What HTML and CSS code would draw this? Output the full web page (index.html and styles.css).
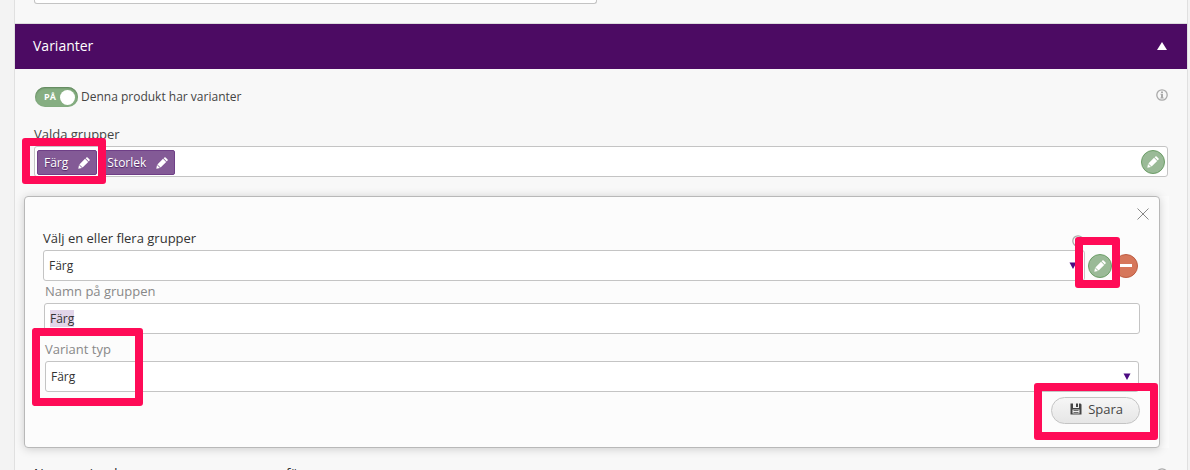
FILE: index.html
```
<!DOCTYPE html>
<html lang="sv">

<head>
    <meta charset="UTF-8">
    <meta name="viewport" content="width=device-width, initial-scale=1.0">
    <title>Varianter</title>
    <link rel="stylesheet" href="styles.css">
</head>

<body>
    <svg width="0" height="0" class="sprite">
        <symbol id="pencil" viewBox="0 0 12 12">
            <path d="M0.3 11.7 L1 8 L4 11 Z M1.4 7.4 L7 1.8 L10.2 5 L4.6 10.6 Z M7.6 1.2 L8.4 0.4 Q9 0 9.6 0.4 L11.6 2.4 Q12 3 11.6 3.6 L10.8 4.4 Z" />
        </symbol>
        <symbol id="info" viewBox="0 0 12 12">
            <circle cx="6" cy="6" r="5.2" fill="none" stroke="currentColor" stroke-width="1.3" />
            <path d="M5 2.5 H7 V4 H5 Z M4.5 4.8 H7 V8.4 H7.7 V9.4 H4.4 V8.4 H5 V5.8 H4.5 Z" />
        </symbol>
        <symbol id="down" viewBox="0 0 8 7">
            <path d="M0.5 0.5 H7.5 L4 7 Z" />
        </symbol>
    </svg>

    <main class="content">
        <div class="previous">
            <input class="field" type="text" aria-label="Namn">
        </div>

        <button class="section-header" type="button">
            Varianter
            <svg class="up" viewBox="0 0 10 8"><path d="M5 0 L10 8 H0 Z" /></svg>
        </button>

        <section class="section">
            <div class="toggle-row">
                <input class="toggle-input" type="checkbox" id="variants" checked>
                <label class="toggle-label" for="variants"><span class="toggle">PÅ</span>Denna produkt har varianter</label>
                <svg class="info"><use href="#info" /></svg>
            </div>

            <div class="label">Valda grupper</div>
            <div class="tags">
                <button class="tag" type="button">Färg <svg class="pencil"><use href="#pencil" /></svg><span class="mark mark-tag"></span></button>
                <button class="tag" type="button">Storlek <svg class="pencil"><use href="#pencil" /></svg></button>
                <button class="round edit" type="button" aria-label="Redigera grupper"><svg class="pencil"><use href="#pencil" /></svg></button>
            </div>

            <div class="panel-wrap">
                <div class="panel">
                    <button class="close" type="button" aria-label="Stäng"><svg viewBox="0 0 12 12"><path d="M0.5 0.5 L11.5 11.5 M11.5 0.5 L0.5 11.5" /></svg></button>

                    <div class="label-row">
                        <label class="label strong" for="group">Välj en eller flera grupper</label>
                        <svg class="info"><use href="#info" /></svg>
                    </div>
                    <div class="group-row">
                        <div class="select">
                            <select class="field" id="group"><option>Färg</option><option>Storlek</option></select>
                            <svg class="arrow"><use href="#down" /></svg>
                        </div>
                        <button class="round edit" type="button" aria-label="Redigera"><svg class="pencil"><use href="#pencil" /></svg><span class="mark mark-edit"></span></button>
                        <button class="round remove" type="button" aria-label="Ta bort"><span class="minus"></span></button>
                    </div>

                    <div class="subform">
                        <label class="label muted" for="name">Namn på gruppen</label>
                        <input class="field" id="name" type="text" value="Färg">
                        <label class="label muted type-label" for="type">Variant typ<span class="mark mark-type"></span></label>
                        <div class="select">
                            <select class="field" id="type"><option>Färg</option><option>Storlek</option></select>
                            <svg class="arrow"><use href="#down" /></svg>
                        </div>
                        <button class="save" type="button">
                            <svg viewBox="0 0 12 12"><path fill-rule="evenodd" d="M0.5 0.5 H3 V5 H9 V0.5 H10.5 L11.5 1.5 V11.5 H0.5 Z M2.5 6.5 V10.5 H9.5 V6.5 Z M6 0.5 H8 V4 H6 Z" /><path d="M3.5 7.3 H8.5 V8.1 H3.5 Z M3.5 9 H8.5 V9.8 H3.5 Z" /></svg>
                            Spara
                            <span class="mark mark-save"></span>
                        </button>
                    </div>
                </div>
            </div>

            <div class="next">
                <span>Namnen i ordern som en egen grupp per färg</span>
                <svg class="info"><use href="#info" /></svg>
            </div>
        </section>
    </main>

    <script>
        document.getElementById("name").select();
    </script>
</body>

</html>
```
FILE: styles.css
```
* {
    box-sizing: border-box;
}

body {
    margin: 0;
    height: 100vh;
    overflow: hidden;
    background: #f3f3f3;
    color: #444;
    font-family: "Open Sans", "Noto Sans", sans-serif;
    font-size: 12px;
    line-height: 18px;
}

button,
input,
select {
    font: inherit;
    color: inherit;
    margin: 0;
}

button {
    cursor: pointer;
}

svg {
    fill: currentColor;
    flex: none;
}

.sprite {
    position: absolute;
}

.content {
    margin: 0 2px 0 14px;
    min-height: 100vh;
    background: #f8f8f8;
    border: 1px solid #e0e0e0;
    border-width: 0 1px;
}

.previous {
    height: 23px;
    padding-left: 19px;
    display: flex;
    align-items: flex-start;
}

.previous .field {
    width: 563px;
    max-width: 90%;
    height: 4px;
    border-top: 0;
    border-radius: 0 0 3px 3px;
}

.field {
    display: block;
    width: 100%;
    height: 31px;
    padding: 0 5px;
    background: #fff;
    border: 1px solid #c4c4c4;
    border-radius: 3px;
    outline: none;
    appearance: none;
    color: #333;
}

.field::selection {
    background: #e2d5e9;
    color: #333;
}

.section-header {
    display: flex;
    align-items: center;
    justify-content: space-between;
    width: 100%;
    height: 46px;
    padding: 0 20px 2px 18px;
    border: 0;
    border-top: 1px solid #ddd;
    background: #4c0b63;
    color: #fff;
    font-size: 14px;
}

.up {
    width: 10px;
    height: 8px;
}

.section {
    padding: 18px 19px 0;
}

.toggle-row {
    display: flex;
    align-items: flex-start;
    justify-content: space-between;
    height: 20px;
    margin-bottom: 18px;
}

.toggle-input {
    position: absolute;
    opacity: 0;
}

.toggle-label {
    display: flex;
    align-items: center;
    gap: 3px;
}

.toggle {
    display: flex;
    align-items: center;
    justify-content: space-between;
    width: 43px;
    height: 20px;
    margin-left: 1px;
    padding: 0 3px 0 9px;
    border-radius: 10px;
    background: #86ae82;
    box-shadow: inset 0 1px 2px #5b8158;
    color: #fff;
    font-size: 9px;
    font-weight: 700;
}

.toggle::after {
    content: "";
    width: 15px;
    height: 15px;
    border-radius: 50%;
    background: #fff;
}

.info {
    width: 12px;
    height: 12px;
    color: #aaa;
}

.toggle-row .info {
    margin-top: 2px;
}

.label {
    display: block;
    font-size: 13px;
}

.strong {
    color: #333;
    font-weight: 500;
}

.muted {
    color: #888;
    font-weight: 500;
}

.tags {
    display: flex;
    align-items: center;
    gap: 3px;
    height: 31px;
    margin-top: 3px;
    padding: 1px 2px 0;
    background: #fff;
    border: 1px solid #c4c4c4;
    border-radius: 3px;
}

.tag {
    position: relative;
    display: flex;
    align-items: center;
    gap: 10px;
    height: 25px;
    padding: 2px 6px 0;
    border: 1px solid #6f3f87;
    border-radius: 2px;
    background: #835a96;
    color: #fff;
    font-weight: 500;
    text-shadow: 0 1px 1px #4c2260;
}

.pencil {
    width: 12px;
    height: 12px;
}

.round {
    position: relative;
    display: flex;
    align-items: center;
    justify-content: center;
    flex: none;
    width: 24px;
    height: 24px;
    padding: 0;
    border-radius: 50%;
    color: #fff;
}

.edit {
    background: #9aba97;
    border: 1px solid #6d9e68;
}

.tags .edit {
    margin-left: auto;
}

.remove {
    background: #d6775b;
    border: 1px solid #bd5d42;
}

.minus {
    width: 12px;
    height: 3px;
    background: #fff;
}

.panel-wrap {
    margin: 19px -1px 0 -10px;
    padding-right: 9px;
    background: #fbfbfb;
}

.panel {
    position: relative;
    padding: 32px 19px 23px 18px;
    background: #fcfcfc;
    border: 1px solid #b8b8b8;
    border-radius: 4px;
    box-shadow: 0 1px 10px rgba(0, 0, 0, 0.18);
}

.close {
    position: absolute;
    top: 11px;
    right: 10px;
    width: 12px;
    height: 12px;
    padding: 0;
    border: 0;
    background: none;
}

.close svg {
    display: block;
    stroke: #888;
    stroke-width: 1;
}

.label-row {
    display: flex;
    align-items: flex-start;
    justify-content: space-between;
    height: 21px;
    padding-right: 56px;
}

.label-row .info {
    margin-top: 6px;
}

.group-row {
    display: flex;
    align-items: center;
    gap: 2px;
    margin-right: 2px;
}

.group-row .select {
    margin-right: 1px;
}

.select {
    position: relative;
    flex: 1;
}

.arrow {
    position: absolute;
    top: 12px;
    right: 8px;
    width: 8px;
    height: 7px;
    color: #4c0b82;
    pointer-events: none;
}

.subform {
    display: flex;
    flex-direction: column;
    padding-left: 1px;
}

.subform .label {
    margin: 1px 0 3px 1px;
}

.subform .type-label {
    position: relative;
    align-self: flex-start;
    margin-top: 6px;
}

.subform .select {
    flex: none;
    margin: 0 1px;
}

.save {
    position: relative;
    display: flex;
    align-items: center;
    align-self: flex-end;
    gap: 6px;
    height: 27px;
    margin-top: 5px;
    padding: 0 16px 3px 18px;
    border: 1px solid #c4c4c4;
    border-radius: 14px;
    background: linear-gradient(#f6f6f6, #e6e6e6);
    font-size: 13px;
}

.save svg {
    width: 12px;
    height: 12px;
}

.mark {
    position: absolute;
    z-index: 1;
    border: 8px solid #ff0b57;
    border-radius: 3px;
    pointer-events: none;
}

.mark-tag {
    inset: -13px -10px -10px -16px;
}

.mark-edit {
    inset: -18px -9px -11px -14px;
}

.mark-type {
    top: -12px;
    left: -13px;
    width: 111px;
    height: 78px;
}

.mark-save {
    inset: -15px -19px -17px -18px;
}

.next {
    display: flex;
    align-items: flex-start;
    justify-content: space-between;
    margin-top: 20px;
    font-size: 13px;
    line-height: 10px;
    color: #222;
}
```
